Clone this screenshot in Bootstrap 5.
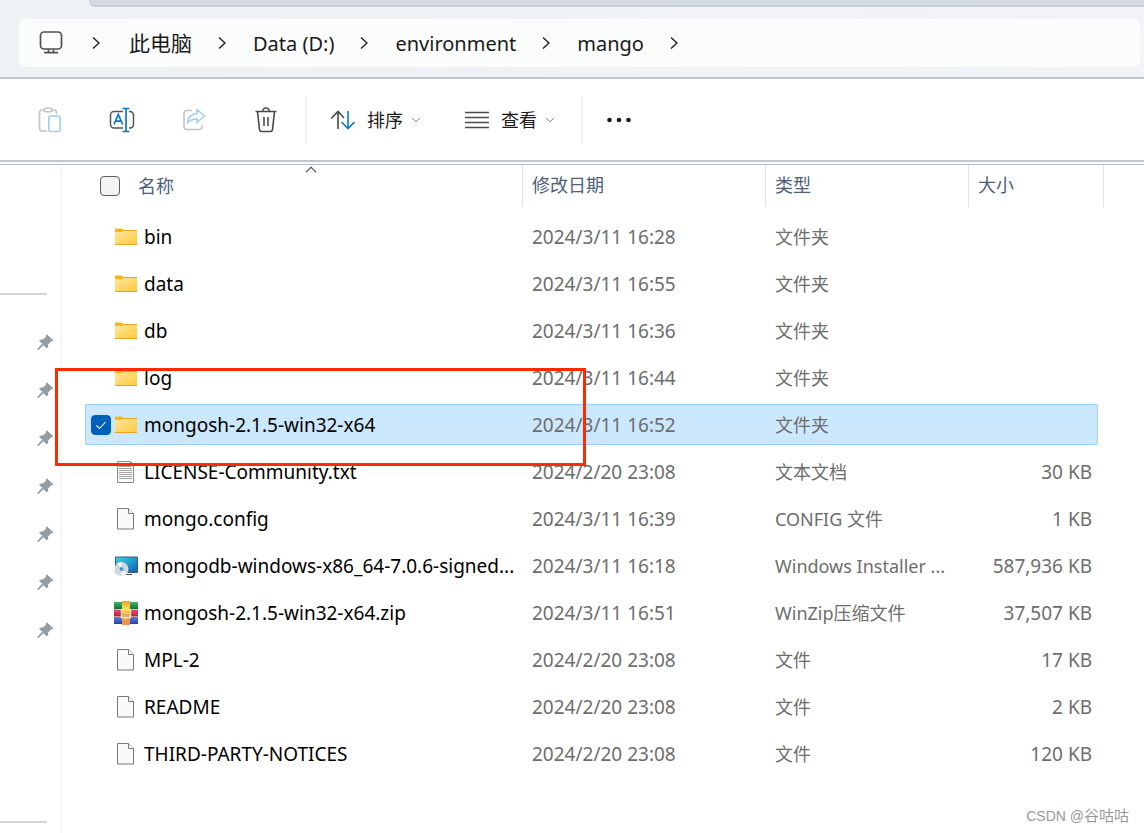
<!DOCTYPE html>
<html lang="zh-CN">
<head>
<meta charset="utf-8">
<meta name="viewport" content="width=device-width, initial-scale=1">
<title>mango</title>
<link href="https://cdn.jsdelivr.net/npm/bootstrap@5.3.0/dist/css/bootstrap.min.css" rel="stylesheet">
<style>
  body { font-family: "Noto Sans", "Noto Sans CJK SC", sans-serif; font-size: 18px; line-height: 24px; color: #000; background: #fff; }
  svg { display: block; flex: none; }
  .top-area { background: linear-gradient(90deg, #eef3f5, #f2f2f7); border-bottom: 2px solid #bec7cc; padding: 0 4px 10px 19px; }
  .tab-strip { height: 7px; margin: 0 -4px 12px 70px; background: #d3dae3; border-bottom: 2px solid #c5ced6; border-left: 1px solid #c5ced6; border-bottom-left-radius: 6px; }
  .address { height: 48px; background: #fbfdfc; border-radius: 6px; padding-left: 20px; font-size: 20px; }
  .address a { color: #1a1a1a; text-decoration: none; white-space: nowrap; padding-top: 2px; }
  .address .cjk-crumb { font-size: 21px; padding-top: 0; }
  .crumb-gap { margin: 0 27px 0 26px; }
  .crumb-first { margin: 0 29px; }
  .tools { height: 83px; padding: 0 26px; border-bottom: 2px solid #c0c8cd; margin-bottom: 2px; }
  .tools button { border: 0; background: none; padding: 0; height: 48px; color: #1a1a1a; white-space: nowrap; }
  .tools .tool-icon { width: 48px; display: flex; align-items: center; justify-content: center; }
  .tool-rule { width: 2px; height: 48px; background: #efefef; margin: 0 24px 0 26px; }
  .rule-first { margin-left: 15px; }
  .pane-row { border-top: 1px solid #b9bbba; }
  .side { width: 62px; flex: none; border-right: 2px solid #f5f6f6; padding-bottom: 10px; }
  .side-rule { width: 47px; height: 2px; background: #d4d4d4; }
  .side-top { margin-top: 128px; }
  .pins { margin-top: 23px; }
  .pins button { border: 0; background: none; padding: 0 6px 0 0; height: 48px; display: flex; align-items: center; justify-content: flex-end; }
  .files { padding: 0 46px 0 23px; min-width: 0; }
  .file-table { width: 100%; table-layout: fixed; border-collapse: separate; border-spacing: 0 6px; margin-top: -6px; }
  .file-table th { height: 45px; padding: 0; font-weight: 400; color: #4c607a; vertical-align: top; }
  .file-table td { height: 41px; padding: 0 0 0 10px; color: #6d6d6d; white-space: nowrap; vertical-align: middle; border: 1px solid transparent; border-width: 1px 0; }
  .col-date { width: 243px; } .col-type { width: 203px; } .col-size { width: 130px; }
  .head-cell { height: 42px; border-left: 1px solid #e2e2e2; padding: 0 0 2px 9px; display: flex; align-items: center; }
  .head-name { margin-left: 15px; padding: 0; border: 0; gap: 18px; position: relative; }
  .head-size { margin-right: -6px; border-right: 1px solid #e2e2e2; }
  .sort-mark { position: absolute; top: 1px; left: 50%; transform: translateX(-50%); }
  .file-table td:first-child { padding: 0 0 0 5px; border-left-width: 1px; color: #000; }
  .file-table td:last-child { padding: 0 5px 0 0; border-right-width: 1px; text-align: right; }
  .file-table td.date-cell, .file-table td:last-child { font-size: 19px; }
  .file-name { display: flex; align-items: center; }
  .file-name label { font-size: 19px; margin-left: 6px; }
  .file-name svg { margin-left: 3px; }
  .tick { appearance: none; width: 20px; height: 20px; flex: none; margin: 0; border: 1px solid #5f5f5f; border-radius: 4px; background: #f3f3f3; }
  td .tick { opacity: 0; }
  td .tick:checked { opacity: 1; border-color: #005fb8; background: #005fb8 url("data:image/svg+xml,%3Csvg xmlns='http://www.w3.org/2000/svg' viewBox='0 0 18 18'%3E%3Cpath d='M4.5 9.5l3 3 6-6.5' fill='none' stroke='white' stroke-width='1.1'/%3E%3C/svg%3E") center/18px no-repeat; }
  .picked td { background: #cce8ff; border-color: #99d1ff; }
  .picked td:first-child { border-radius: 2px 0 0 2px; }
  .picked td:last-child { border-radius: 0 2px 2px 0; }
  .red-frame { position: absolute; left: 55px; top: 203px; width: 531px; height: 98px; border: 3px solid #ff2a00; pointer-events: none; }
  .credit { position: absolute; right: 15px; bottom: 5px; font-size: 15px; color: #999; }
  .credit span { font-family: "Liberation Sans", sans-serif; font-size: 14px; }
</style>
</head>
<body class="d-flex flex-column min-vh-100">
<svg width="0" height="0" class="position-absolute" aria-hidden="true">
  <defs>
    <linearGradient id="gFold" x1="0" y1="0" x2="1" y2="1"><stop offset="0" stop-color="#ffe7a0"/><stop offset="1" stop-color="#fdc937"/></linearGradient>
    <linearGradient id="gScreen" x1="0" y1="0" x2="1" y2="1"><stop offset="0" stop-color="#35d6e6"/><stop offset="1" stop-color="#0a62b8"/></linearGradient>
    <linearGradient id="gGreen" x1="0" y1="0" x2="0" y2="1"><stop offset="0" stop-color="#4fb06c"/><stop offset="1" stop-color="#0f7434"/></linearGradient>
    <linearGradient id="gRed" x1="0" y1="0" x2="0" y2="1"><stop offset="0" stop-color="#e5566c"/><stop offset="1" stop-color="#b71c3c"/></linearGradient>
    <linearGradient id="gBlue" x1="0" y1="0" x2="0" y2="1"><stop offset="0" stop-color="#5b7ede"/><stop offset="1" stop-color="#2b3f9e"/></linearGradient>
    <linearGradient id="gStrap" x1="0" y1="0" x2="0" y2="1"><stop offset="0" stop-color="#f2a32c"/><stop offset=".35" stop-color="#ffdf5a"/><stop offset=".6" stop-color="#f0a83a"/><stop offset="1" stop-color="#f28a4a"/></linearGradient>
    <symbol id="folder" viewBox="0 0 24 24"><path d="M1 3.500h7l1.500 1.500H23v5H1z" fill="#f9b51c"/><path d="M1 7h7l1.500-1.200H23V20H1z" fill="url(#gFold)"/><path d="M9 5.500H23M1 19.500H23" stroke="#e5a422" fill="none"/></symbol>
    <symbol id="doc" viewBox="0 0 24 24"><path d="M3.500 1.500h11l5 5v15.500h-16z" fill="#fafafa" stroke="#7a7a7a"/><path d="M14.500 1.500v5h5" fill="#fff" stroke="#7a7a7a"/></symbol>
    <symbol id="textdoc" viewBox="0 0 24 24"><path d="M3.500 1.500h13l3 3v18h-16z" fill="#fafafa" stroke="#8a8a8a"/><path d="M16.500 1.500v3h3" fill="none" stroke="#8a8a8a"/><path d="M5 6.500h12M5 8.500h13M5 10.500h13M5 12.500h13M5 14.500h13M5 16.500h13M5 18.500h13" stroke="#a5a5a5"/></symbol>
    <symbol id="installer" viewBox="0 0 24 24"><path d="M1.500 3h22v15.500h-22z" fill="url(#gScreen)" stroke="#48596a"/><path d="M10 20.500h8" stroke="#46525d"/><circle cx="7.500" cy="15" r="7" fill="#d3d6da"/><path d="M7.500 15L3 9.600A7 7 0 0 1 8 8zM7.500 15l5.500 4.300A7 7 0 0 1 7 22z" fill="#f3f4f5"/><circle cx="7.500" cy="15" r="2.200" fill="#3c96db" stroke="#a9cfee"/></symbol>
    <symbol id="archive" viewBox="0 0 24 24"><path d="M0 1h24v7H0z" fill="url(#gGreen)"/><path d="M0 8.500h24v7H0z" fill="url(#gRed)"/><path d="M0 16h24v7H0z" fill="url(#gBlue)"/><path d="M8 0h8v24H8z" fill="url(#gStrap)"/><path d="M7.500 8v8.500h9V8M12 12v6" fill="none" stroke="#eee9d8" stroke-width="1.400"/><path d="M12 13v3" stroke="#8c8170"/></symbol>
    <symbol id="pin" viewBox="0 0 16 16"><path d="M9.200.2L15.800 6.300c-.2 1.200-1.600.9-2.500 1.300L10.600 10.800c.1 1.800-.2 3-1.200 3.800L6 11.300 1 16H0v-1.200L4.600 9.800 1.500 6.500c1.200-1 2.500-1.200 4.100-.9L8.300 2.800C8.600 1.800 8.300.6 9.200.2z" fill="#929da4"/></symbol>
    <symbol id="next" viewBox="0 0 8 14"><path d="M1 1.500l6 5.500-6 5.500" fill="none" stroke="#222" stroke-width="1.500"/></symbol>
    <symbol id="down" viewBox="0 0 10 6"><path d="M1 .8l4 4 4-4" fill="none" stroke="#777"/></symbol>
  </defs>
</svg>

<header class="top-area">
  <div class="tab-strip"></div>
  <nav class="address d-flex align-items-center" aria-label="地址">
    <svg width="24" height="24" viewBox="0 0 24 24" fill="none" stroke="#4d5254" stroke-width="1.700"><rect x="1.500" y="1" width="21" height="17" rx="3.500"/><path d="M9.500 18v3.500M14.500 18v3.500M5 21.700h14"/></svg>
    <svg width="8" height="14" class="crumb-first"><use href="#next"/></svg>
    <a href="#" class="cjk-crumb">此电脑</a>
    <svg width="8" height="14" class="crumb-gap"><use href="#next"/></svg>
    <a href="#">Data (D:)</a>
    <svg width="8" height="14" class="crumb-gap"><use href="#next"/></svg>
    <a href="#">environment</a>
    <svg width="8" height="14" class="crumb-gap"><use href="#next"/></svg>
    <a href="#">mango</a>
    <svg width="8" height="14" class="crumb-gap"><use href="#next"/></svg>
  </nav>
</header>

<div class="tools d-flex align-items-center" role="toolbar">
  <div class="d-flex gap-4">
    <button class="tool-icon" type="button" aria-label="粘贴"><svg width="24" height="26" viewBox="0 0 24 26" fill="none" stroke="#c4c4c4" stroke-width="1.600"><path d="M6 3H4a2.500 2.500 0 0 0-2.500 2.500v16A2.500 2.500 0 0 0 4 24h5M14 3h2a2.500 2.500 0 0 1 2.500 2.500V7"/><rect x="6" y="1.300" width="8" height="3.500" rx="1.700"/><rect x="10.800" y="9" width="11.400" height="15.500" rx="2" stroke="#9fcdf3"/></svg></button>
    <button class="tool-icon" type="button" aria-label="重命名"><svg width="26" height="26" viewBox="0 0 26 26" fill="none" stroke="#555" stroke-width="1.500"><path d="M14 4.500H5A3.500 3.500 0 0 0 1.500 8v9.500A3.500 3.500 0 0 0 5 21h9M20 4.500h1A3.500 3.500 0 0 1 24.500 8v9.500A3.500 3.500 0 0 1 21 21h-1"/><path d="M5 17.500L9.300 7.500l4.300 10M6.500 14.200h5.700M17 2v22M13.500 1.500h7M13.500 24.500h7" stroke="#0b78d4" stroke-width="1.700"/></svg></button>
    <button class="tool-icon" type="button" aria-label="共享"><svg width="24" height="24" viewBox="0 0 24 24" fill="none" stroke="#c4c4c4" stroke-width="1.600" stroke-linejoin="round"><path d="M10 2.500H5A3 3 0 0 0 2 5.500v13a3 3 0 0 0 3 3h12a3 3 0 0 0 3-3v-1.500"/><path d="M15 1.500l7.500 6.500-7.500 6.500V11c-4.500 0-7 1-9.500 4 .5-5.500 4-9 9.500-9.500z" stroke="#9fcdf3"/></svg></button>
    <button class="tool-icon" type="button" aria-label="删除"><svg width="24" height="26" viewBox="0 0 24 26" fill="none" stroke="#4a4a4a" stroke-width="1.600"><path d="M1.500 4.500h21M8.500 4.500a3.500 3.500 0 0 1 7 0M3.500 4.500l2 18.200A2 2 0 0 0 7.500 24.500h9a2 2 0 0 0 2-1.800l2-18.200M10 10v9M14 10v9"/></svg></button>
  </div>
  <div class="tool-rule rule-first"></div>
  <button type="button" class="d-flex align-items-center"><svg width="24" height="20" viewBox="1 0 24 20" fill="none" stroke-width="1.600" class="me-2"><path d="M8 19V1.500M1.200 8.500L8 1.500l6 6.500" stroke="#4a4a4a"/><path d="M18 1v17.500M11.500 12l6.500 6.500 6.500-6.500" stroke="#0b78d4"/></svg><span class="me-2 ps-1">排序</span><svg width="10" height="6"><use href="#down"/></svg></button>
  <button type="button" class="d-flex align-items-center ms-4 ps-3"><svg width="24" height="18" viewBox="0 0 24 18" stroke="#4a4a4a" stroke-width="1.400" class="me-2 ms-1"><path d="M0 1.500h24M0 6.500h24M0 11.500h24M0 16.500h24"/></svg><span class="me-2 ps-1">查看</span><svg width="10" height="6"><use href="#down"/></svg></button>
  <div class="tool-rule"></div>
  <button type="button" aria-label="更多"><svg width="24" height="6" viewBox="0 0 24 6" fill="#1a1a1a"><circle cx="2.500" cy="3" r="2.300"/><circle cx="12" cy="3" r="2.300"/><circle cx="21.500" cy="3" r="2.300"/></svg></button>
</div>

<div class="pane-row d-flex flex-grow-1 position-relative">
  <aside class="side d-flex flex-column">
    <div class="side-rule side-top"></div>
    <div class="pins d-flex flex-column">
      <button type="button" aria-label="取消固定 1"><svg width="17" height="16"><use href="#pin"/></svg></button>
      <button type="button" aria-label="取消固定 2"><svg width="17" height="16"><use href="#pin"/></svg></button>
      <button type="button" aria-label="取消固定 3"><svg width="17" height="16"><use href="#pin"/></svg></button>
      <button type="button" aria-label="取消固定 4"><svg width="17" height="16"><use href="#pin"/></svg></button>
      <button type="button" aria-label="取消固定 5"><svg width="17" height="16"><use href="#pin"/></svg></button>
      <button type="button" aria-label="取消固定 6"><svg width="17" height="16"><use href="#pin"/></svg></button>
      <button type="button" aria-label="取消固定 7"><svg width="17" height="16"><use href="#pin"/></svg></button>
    </div>
    <div class="side-rule mt-auto"></div>
  </aside>

  <main class="files flex-grow-1">
    <table class="file-table">
      <colgroup><col><col class="col-date"><col class="col-type"><col class="col-size"></colgroup>
      <thead><tr>
        <th><div class="head-cell head-name"><input class="tick" type="checkbox" id="all"><label for="all">名称</label><svg class="sort-mark" width="12" height="7" viewBox="0 0 12 7"><path d="M.8 6.300L6 1.200l5.200 5.100" fill="none" stroke="#666" stroke-width="1.200"/></svg></div></th>
        <th><div class="head-cell">修改日期</div></th>
        <th><div class="head-cell">类型</div></th>
        <th><div class="head-cell head-size">大小</div></th>
      </tr></thead>
      <tbody>
        <tr><td><div class="file-name"><input class="tick" type="checkbox" id="f1"><svg width="24" height="24"><use href="#folder"/></svg><label for="f1">bin</label></div></td><td class="date-cell">2024/3/11 16:28</td><td>文件夹</td><td></td></tr>
        <tr><td><div class="file-name"><input class="tick" type="checkbox" id="f2"><svg width="24" height="24"><use href="#folder"/></svg><label for="f2">data</label></div></td><td class="date-cell">2024/3/11 16:55</td><td>文件夹</td><td></td></tr>
        <tr><td><div class="file-name"><input class="tick" type="checkbox" id="f3"><svg width="24" height="24"><use href="#folder"/></svg><label for="f3">db</label></div></td><td class="date-cell">2024/3/11 16:36</td><td>文件夹</td><td></td></tr>
        <tr><td><div class="file-name"><input class="tick" type="checkbox" id="f4"><svg width="24" height="24"><use href="#folder"/></svg><label for="f4">log</label></div></td><td class="date-cell">2024/3/11 16:44</td><td>文件夹</td><td></td></tr>
        <tr class="picked"><td><div class="file-name"><input class="tick" type="checkbox" id="f5" checked><svg width="24" height="24"><use href="#folder"/></svg><label for="f5">mongosh-2.1.5-win32-x64</label></div></td><td class="date-cell">2024/3/11 16:52</td><td>文件夹</td><td></td></tr>
        <tr><td><div class="file-name"><input class="tick" type="checkbox" id="f6"><svg width="24" height="24"><use href="#textdoc"/></svg><label for="f6">LICENSE-Community.txt</label></div></td><td class="date-cell">2024/2/20 23:08</td><td>文本文档</td><td>30 KB</td></tr>
        <tr><td><div class="file-name"><input class="tick" type="checkbox" id="f7"><svg width="24" height="24"><use href="#doc"/></svg><label for="f7">mongo.config</label></div></td><td class="date-cell">2024/3/11 16:39</td><td>CONFIG 文件</td><td>1 KB</td></tr>
        <tr><td><div class="file-name"><input class="tick" type="checkbox" id="f8"><svg width="24" height="24"><use href="#installer"/></svg><label for="f8">mongodb-windows-x86_64-7.0.6-signed...</label></div></td><td class="date-cell">2024/3/11 16:18</td><td>Windows Installer ...</td><td>587,936 KB</td></tr>
        <tr><td><div class="file-name"><input class="tick" type="checkbox" id="f9"><svg width="24" height="24"><use href="#archive"/></svg><label for="f9">mongosh-2.1.5-win32-x64.zip</label></div></td><td class="date-cell">2024/3/11 16:51</td><td>WinZip压缩文件</td><td>37,507 KB</td></tr>
        <tr><td><div class="file-name"><input class="tick" type="checkbox" id="f10"><svg width="24" height="24"><use href="#doc"/></svg><label for="f10">MPL-2</label></div></td><td class="date-cell">2024/2/20 23:08</td><td>文件</td><td>17 KB</td></tr>
        <tr><td><div class="file-name"><input class="tick" type="checkbox" id="f11"><svg width="24" height="24"><use href="#doc"/></svg><label for="f11">README</label></div></td><td class="date-cell">2024/2/20 23:08</td><td>文件</td><td>2 KB</td></tr>
        <tr><td><div class="file-name"><input class="tick" type="checkbox" id="f12"><svg width="24" height="24"><use href="#doc"/></svg><label for="f12">THIRD-PARTY-NOTICES</label></div></td><td class="date-cell">2024/2/20 23:08</td><td>文件</td><td>120 KB</td></tr>
      </tbody>
    </table>
  </main>
  <div class="red-frame"></div>
  <div class="credit"><span>CSDN @</span>谷咕咕</div>
</div>
<script src="https://cdn.jsdelivr.net/npm/bootstrap@5.3.0/dist/js/bootstrap.bundle.min.js"></script>
</body>
</html>
